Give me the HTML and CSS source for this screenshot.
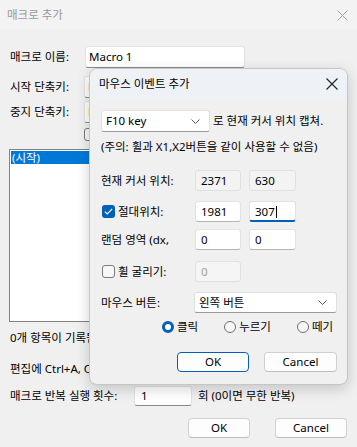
FILE: index.html
```html
<!DOCTYPE html>
<html lang="ko">
<head>
<meta charset="utf-8">
<title>매크로 추가</title>
<link rel="stylesheet" href="styles.css">
</head>
<body>
<div class="win">
  <div class="titlebar">
    <span class="title">매크로 추가</span>
    <svg class="wclose" width="11" height="11" viewBox="0 0 11 11"><path d="M0.5 0.5L10.5 10.5M10.5 0.5L0.5 10.5" stroke="#a0a0a0" stroke-width="1" fill="none"/></svg>
  </div>
  <div class="content">
    <div class="row r1"><span class="lbl">매크로 이름:</span><div class="field name">Macro 1</div></div>
    <div class="row r2"><span class="lbl">시작 단축키:</span><div class="field hk">F11 key</div></div>
    <div class="row r3"><span class="lbl">중지 단축키:</span><div class="field hk">F12 key</div></div>
    <div class="row r4"><span class="lbl"></span><span class="cb off"></span></div>
    <div class="listbox"><div class="sel">(시작)</div></div>
    <div class="line l1">0개 항목이 기록됨.</div>
    <div class="line l2">편집에 Ctrl+A, Ctrl+C, Ctrl+V 사용 가능</div>
    <div class="row rep"><span class="lbl2">매크로 반복 실행 횟수:</span><div class="field cnt">1</div><span class="after">회 (0이면 무한 반복)</span></div>
    <div class="btns outer"><div class="btn ok">OK</div><div class="btn cancel">Cancel</div></div>
  </div>
</div>

<div class="dlg">
  <div class="dtitle">
    <span>마우스 이벤트 추가</span>
    <svg class="dclose" width="12" height="12" viewBox="0 0 12 12"><path d="M0.5 0.5L11.5 11.5M11.5 0.5L0.5 11.5" stroke="#222" stroke-width="1.1" fill="none"/></svg>
  </div>
  <div class="dbody">
    <div class="keyrow">
      <div class="select key"><span>F10 key</span><svg class="chev" width="9" height="5" viewBox="0 0 9 5"><path d="M0.5 0.5L4.5 4.5L8.5 0.5" stroke="#555" fill="none"/></svg></div>
      <span class="keytxt">로 현재 커서 위치 캡쳐.</span>
    </div>
    <div class="note">(주의: 휠과 X1,X2버튼을 같이 사용할 수 없음)</div>
    <div class="drow cur"><span class="dl">현재 커서 위치:</span><div class="box ro">2371</div><div class="box ro w2">630</div></div>
    <div class="drow abs"><span class="dl"><span class="cb on"><svg width="9" height="7" viewBox="0 0 9 7"><path d="M0.8 3.6L3.2 5.9L8.2 0.9" stroke="#fff" stroke-width="1.2" fill="none"/></svg></span>절대위치:</span><div class="box">1981</div><div class="box w2 focus">307<span class="caret"></span></div></div>
    <div class="drow rnd"><span class="dl">랜덤 영역 (dx,</span><div class="box">0</div><div class="box w2">0</div></div>
    <div class="drow whl"><span class="dl"><span class="cb off"></span>휠 굴리기:</span><div class="box dis">0</div></div>
    <div class="drow mbtn"><span class="dl">마우스 버튼:</span><div class="select mouse"><span>왼쪽 버튼</span><svg class="chev" width="9" height="5" viewBox="0 0 9 5"><path d="M0.5 0.5L4.5 4.5L8.5 0.5" stroke="#555" fill="none"/></svg></div></div>
    <div class="radios">
      <span class="rad r-click"><span class="dot on"></span>클릭</span>
      <span class="rad r-press"><span class="dot"></span>누르기</span>
      <span class="rad r-rel"><span class="dot"></span>떼기</span>
    </div>
    <div class="btns inner"><div class="btn ok def">OK</div><div class="btn cancel">Cancel</div></div>
  </div>
</div>
</body>
</html>
```

FILE: styles.css
```css
* { box-sizing: border-box; margin: 0; padding: 0; }
html, body { width: 357px; height: 447px; overflow: hidden; }
body {
  background: #f0f0f0;
  font-family: "Noto Sans", "Noto Sans CJK KR", sans-serif;
  font-size: 11.5px;
  line-height: 16px;
  color: #000;
  position: relative;
}
.win { height: 447px; }
.titlebar {
  height: 30px;
  background: #f3f3f3;
  display: flex;
  align-items: center;
  justify-content: space-between;
  padding: 0 9px 0 7px;
}
.title { color: #9a9a9a; font-size: 11.5px; }
.wclose { margin-top: 0px; }
.content { padding: 16px 0 0 10px; display: flex; flex-direction: column; align-items: flex-start; }
.row { display: flex; align-items: center; height: 22px; }
.lbl { width: 75px; }
.field {
  background: #fff;
  border: 1px solid #e2e2e2;
  border-bottom-color: #8a8a8a;
  border-radius: 3px;
  height: 22px;
  padding: 0 0 0 3px;
  display: flex;
  align-items: center;
}
.name { width: 160px; }
.hk { width: 120px; margin-left: -1px; }
.r2 { margin-top: 8px; }
.r3 { margin-top: 3px; }
.r4 { margin-top: 5px; height: 13px; }
.r4 .lbl { width: 74px; }
.listbox {
  margin-top: 8px;
  margin-left: -1px;
  width: 270px;
  height: 173px;
  background: #fff;
  border: 1px solid #828282;
  padding: 1px;
}
.sel { background: #0078d7; color: #fff; height: 13px; line-height: 13px; padding-left: 1px; }
.line { height: 16px; }
.l1 { margin-top: 8px; }
.l2 { margin-top: 15px; }
.rep { margin-top: 9px; height: 20px; }
.lbl2 { width: 124px; }
.cnt { width: 58px; height: 20px; padding-left: 6px; }
.after { margin-left: 6px; }
.btns { display: flex; }
.btn {
  height: 20px;
  background: #fdfdfd;
  border: 1px solid #d0d0d0;
  border-bottom-color: #bdbdbd;
  border-radius: 4px;
  display: flex;
  align-items: center;
  justify-content: center;
  font-size: 11.5px;
}
.outer { margin-top: 12px; margin-left: 178px; }
.outer .ok { width: 62px; }
.outer .cancel { width: 72px; margin-left: 25px; }

.cb {
  display: inline-flex;
  align-items: center;
  justify-content: center;
  width: 13px;
  height: 13px;
  border-radius: 3px;
  flex: none;
}
.cb.off { border: 1px solid #7a7a7a; background: #f7f7f7; }
.cb.on { background: #005fb8; }

/* inner dialog (overlay) */
.dlg {
  position: absolute;
  left: 89px;
  top: 68px;
  width: 259px;
  height: 317px;
  background: #f0f0f0;
  border: 1px solid #c6c6c6;
  border-radius: 8px;
  overflow: hidden;
  box-shadow: 0 4px 14px rgba(0,0,0,0.18);
}
.dtitle {
  height: 29px;
  background: #eef2f7;
  display: flex;
  align-items: center;
  justify-content: space-between;
  padding: 0 9px 0 9px;
}
.dbody { padding: 12px 0 0 11px; display: flex; flex-direction: column; align-items: flex-start; }
.keyrow { display: flex; align-items: center; height: 22px; }
.select {
  background: #fff;
  border: 1px solid #e0e0e0;
  border-bottom-color: #9a9a9a;
  border-radius: 3px;
  height: 22px;
  display: flex;
  align-items: center;
  justify-content: space-between;
  padding: 0 9px 0 4px;
}
.key { width: 109px; }
.keytxt { margin-left: 3px; }
.note { margin-top: 7px; height: 16px; }
.drow { display: flex; align-items: center; height: 21px; }
.dl { width: 94px; display: flex; align-items: center; }
.dl .cb { margin: 0 3px 0 1px; }
.box {
  width: 46px;
  height: 21px;
  background: #fff;
  border: 1px solid #e2e2e2;
  border-bottom-color: #b5b5b5;
  border-radius: 3px;
  padding-left: 5px;
  display: flex;
  align-items: center;
}
.box.w2 { width: 47px; margin-left: 8px; }
.box.ro { background: #f3f3f3; border-color: #e0e0e0; }
.box.dis { background: #f5f5f5; border-color: #e0e0e0; color: #a0a0a0; }
.box.focus { border-bottom: 2px solid #005fb8; padding-top: 1px; }
.caret { display: inline-block; width: 1px; height: 12px; background: #000; margin-left: 1px; }
.cur { margin-top: 15px; }
.abs { margin-top: 10px; }
.rnd { margin-top: 7px; }
.whl { margin-top: 11px; }
.mbtn { margin-top: 10px; }
.mouse { width: 143px; margin-left: -1px; height: 21px; }
.radios { display: flex; align-items: center; height: 14px; margin-top: 7px; padding-left: 61px; }
.rad { display: flex; align-items: center; }
.dot {
  width: 12px;
  height: 12px;
  border-radius: 50%;
  border: 1px solid #707070;
  background: #f7f7f7;
  margin-right: 3px;
  flex: none;
}
.dot.on { border: 3.5px solid #005fb8; background: #fff; }
.r-press { margin-left: 26px; }
.r-rel { margin-left: 26px; }
.inner { margin-top: 18px; margin-left: 76px; }
.inner .ok { width: 72px; }
.inner .ok.def { border: 1px solid #005fb8; }
.inner .cancel { width: 73px; margin-left: 15px; }
```
